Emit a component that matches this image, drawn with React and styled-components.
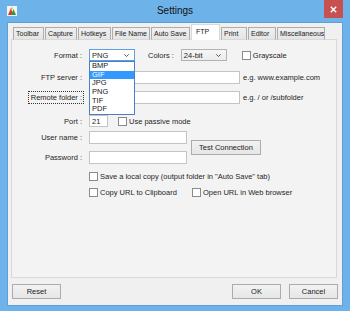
import React from "react";
import styled, { createGlobalStyle } from "styled-components";

const GlobalStyle = createGlobalStyle`
  html, body { margin: 0; padding: 0; background: #6eb2ea; }
  body { font-family: "Liberation Sans", Arial, sans-serif; }
`;

const FRAME = "#6eb2ea";

const Window = styled.div`
  width: 350px;
  height: 311px;
  box-sizing: border-box;
  background: ${FRAME};
  padding: 0 7px 5px 7px;
  display: flex;
  flex-direction: column;
  font-size: 7.5px;
  color: #1e1e1e;
`;

const TitleBar = styled.div`
  height: 22px;
  display: grid;
  grid-template-columns: 1fr auto 1fr;
  align-items: start;
`;

const AppIcon = styled.svg`
  margin-top: 6px;
  width: 10px;
  height: 10px;
`;

const Title = styled.div`
  font-size: 10px;
  line-height: 22px;
  color: #111;
`;

const CloseButton = styled.div`
  justify-self: end;
  width: 19px;
  height: 18px;
  background: #c75050;
  display: flex;
  align-items: center;
  justify-content: center;
`;

const Client = styled.div`
  flex: 1;
  background: #f0f0f0;
  border: 1px solid #5f9fd6;
  padding: 2px 5px 5px 3px;
  display: flex;
  flex-direction: column;
`;

const TabStrip = styled.div`
  display: flex;
  align-items: flex-end;
  height: 15px;
  padding-left: 2px;
  position: relative;
  z-index: 1;
  margin-bottom: -1px;
`;

const Tab = styled.div`
  box-sizing: border-box;
  width: ${(p) => p.$w}px;
  height: ${(p) => (p.$active ? 16 : 13)}px;
  margin-right: 1px;
  border: 1px solid ${(p) => (p.$active ? "#d9d9d9" : "#acacac")};
  border-bottom: ${(p) => (p.$active ? "none" : "1px solid #d9d9d9")};
  background: ${(p) => (p.$active ? "#ffffff" : "linear-gradient(#f0f0f0, #e5e5e5)")};
  padding: ${(p) => (p.$active ? "2px 0 0 4px" : "1px 0 0 2px")};
  font-size: 7px;
  line-height: 10px;
  white-space: nowrap;
  overflow: hidden;
  color: #1a1a1a;
`;

const Panel = styled.div`
  height: 239px;
  box-sizing: border-box;
  border: 1px solid #d9d9d9;
  background: #f3f3f3;
  padding: 9px 0 0 0;
  position: relative;
`;

const Row = styled.div`
  display: flex;
  align-items: center;
  height: ${(p) => p.$h || 13}px;
  margin-top: ${(p) => p.$gap || 0}px;
`;

const Label = styled.div`
  width: 70px;
  text-align: right;
  margin-right: 7px;
  white-space: nowrap;
  flex-shrink: 0;
`;

const FocusText = styled.span`
  outline: 1px dotted #333;
  outline-offset: 1px;
  padding: 0 0 0 1px;
`;

const Inline = styled.div`
  white-space: nowrap;
  margin-left: ${(p) => p.$ml || 0}px;
`;

const TextInput = styled.div`
  box-sizing: border-box;
  width: ${(p) => p.$w}px;
  height: ${(p) => p.$h || 13}px;
  background: #fff;
  border: 1px solid #c4c4c4;
  padding-left: 2px;
  line-height: 11px;
  flex-shrink: 0;
`;

const Select = styled.div`
  box-sizing: border-box;
  width: 46px;
  height: 12px;
  border: 1px solid ${(p) => (p.$focus ? "#5a9fe0" : "#b3b3b3")};
  background: ${(p) => (p.$focus ? "#ffffff" : "linear-gradient(#f6f6f6, #ececec)")};
  display: flex;
  align-items: center;
  justify-content: space-between;
  padding: 0 5px 0 2px;
  margin-left: ${(p) => p.$ml || 0}px;
  position: relative;
  flex-shrink: 0;
`;

const DropList = styled.div`
  position: absolute;
  top: 11px;
  left: -1px;
  width: 46px;
  box-sizing: border-box;
  border: 1px solid #4b7fc4;
  background: #fff;
  z-index: 5;
`;

const DropItem = styled.div`
  height: 8.7px;
  line-height: 8.7px;
  padding-left: 2px;
  background: ${(p) => (p.$sel ? "#3399ff" : "transparent")};
  color: ${(p) => (p.$sel ? "#fff" : "#1a1a1a")};
`;

const CheckWrap = styled.div`
  display: flex;
  align-items: center;
  white-space: nowrap;
  width: ${(p) => (p.$w ? `${p.$w}px` : "auto")};
  margin-left: ${(p) => p.$ml || 0}px;
  flex-shrink: 0;
`;

const Box = styled.div`
  width: 9px;
  height: 9px;
  box-sizing: border-box;
  border: 1px solid #8a8a8a;
  background: #fff;
  margin-right: 2px;
`;

const Button = styled.div`
  box-sizing: border-box;
  width: ${(p) => p.$w || 49}px;
  height: 15px;
  border: 1px solid #acacac;
  background: linear-gradient(#f2f2f2, #e6e6e6);
  display: flex;
  align-items: center;
  justify-content: center;
  margin-left: ${(p) => p.$ml || 0}px;
  flex-shrink: 0;
  color: #1a1a1a;
`;

const AccountBlock = styled.div`
  display: flex;
  align-items: center;
  margin-top: 4px;
`;

const AccountFields = styled.div`
  display: flex;
  flex-direction: column;
  gap: 7px;
`;

const Footer = styled.div`
  display: flex;
  margin-top: 6px;
  padding-left: 1px;
`;

const Chevron = () => (
  <svg width="5" height="3" viewBox="0 0 5 3">
    <path d="M0.3 0.3 L2.5 2.5 L4.7 0.3" fill="none" stroke="#444" strokeWidth="0.9" />
  </svg>
);

const Check = ({ children, w, ml }) => (
  <CheckWrap $w={w} $ml={ml}>
    <Box />
    {children}
  </CheckWrap>
);

const tabs = [
  { name: "Toolbar", w: 31 },
  { name: "Capture", w: 32 },
  { name: "Hotkeys", w: 33 },
  { name: "File Name", w: 38 },
  { name: "Auto Save", w: 39 },
  { name: "FTP", w: 29, active: true },
  { name: "Print", w: 26 },
  { name: "Editor", w: 28 },
  { name: "Miscellaneous", w: 48 },
];

const formats = ["BMP", "GIF", "JPG", "PNG", "TIF", "PDF"];

export default function App() {
  return (
    <>
      <GlobalStyle />
      <Window>
        <TitleBar>
          <AppIcon viewBox="0 0 10 10">
            <rect x="0" y="0" width="10" height="10" fill="#f4f4f4" />
            <path d="M1 9 L4 2 L6 9 Z" fill="#d63a2a" />
            <path d="M4 9 L6.5 3 L9 9 Z" fill="#2f9a3a" />
            <path d="M3 3 L5 1 L6 3 Z" fill="#f0b020" />
          </AppIcon>
          <Title>Settings</Title>
          <CloseButton>
            <svg width="7" height="7" viewBox="0 0 7 7">
              <path d="M0.8 0.8 L6.2 6.2 M6.2 0.8 L0.8 6.2" stroke="#fff" strokeWidth="1.4" />
            </svg>
          </CloseButton>
        </TitleBar>
        <Client>
          <TabStrip>
            {tabs.map((t) => (
              <Tab key={t.name} $w={t.w} $active={t.active}>
                {t.name}
              </Tab>
            ))}
          </TabStrip>
          <Panel>
            <Row $h={12}>
              <Label>Format :</Label>
              <Select $focus>
                PNG
                <Chevron />
                <DropList>
                  {formats.map((f) => (
                    <DropItem key={f} $sel={f === "GIF"}>
                      {f}
                    </DropItem>
                  ))}
                </DropList>
              </Select>
              <Inline $ml={13}>Colors :</Inline>
              <Select $ml={7}>
                24-bit
                <Chevron />
              </Select>
              <Check ml={15}>Grayscale</Check>
            </Row>
            <Row $gap={10}>
              <Label>FTP server :</Label>
              <TextInput $w={151} />
              <Inline $ml={3}>e.g. www.example.com</Inline>
            </Row>
            <Row $gap={7}>
              <Label>
                <FocusText>Remote folder :</FocusText>
              </Label>
              <TextInput $w={151} />
              <Inline $ml={3}>e.g. / or /subfolder</Inline>
            </Row>
            <Row $gap={11} $h={12}>
              <Label>Port :</Label>
              <TextInput $w={19} $h={12}>21</TextInput>
              <Check ml={10}>Use passive mode</Check>
            </Row>
            <AccountBlock>
              <AccountFields>
                <Row>
                  <Label>User name :</Label>
                  <TextInput $w={98} />
                </Row>
                <Row>
                  <Label>Password :</Label>
                  <TextInput $w={98} />
                </Row>
              </AccountFields>
              <Button $w={70} $ml={4}>Test Connection</Button>
            </AccountBlock>
            <Row $gap={7} $h={10}>
              <Label />
              <Check>Save a local copy (output folder in "Auto Save" tab)</Check>
            </Row>
            <Row $gap={6} $h={10}>
              <Label />
              <Check w={103}>Copy URL to Clipboard</Check>
              <Check>Open URL in Web browser</Check>
            </Row>
          </Panel>
          <Footer>
            <Button>Reset</Button>
            <Button $ml={171}>OK</Button>
            <Button $ml={8}>Cancel</Button>
          </Footer>
        </Client>
      </Window>
    </>
  );
}
